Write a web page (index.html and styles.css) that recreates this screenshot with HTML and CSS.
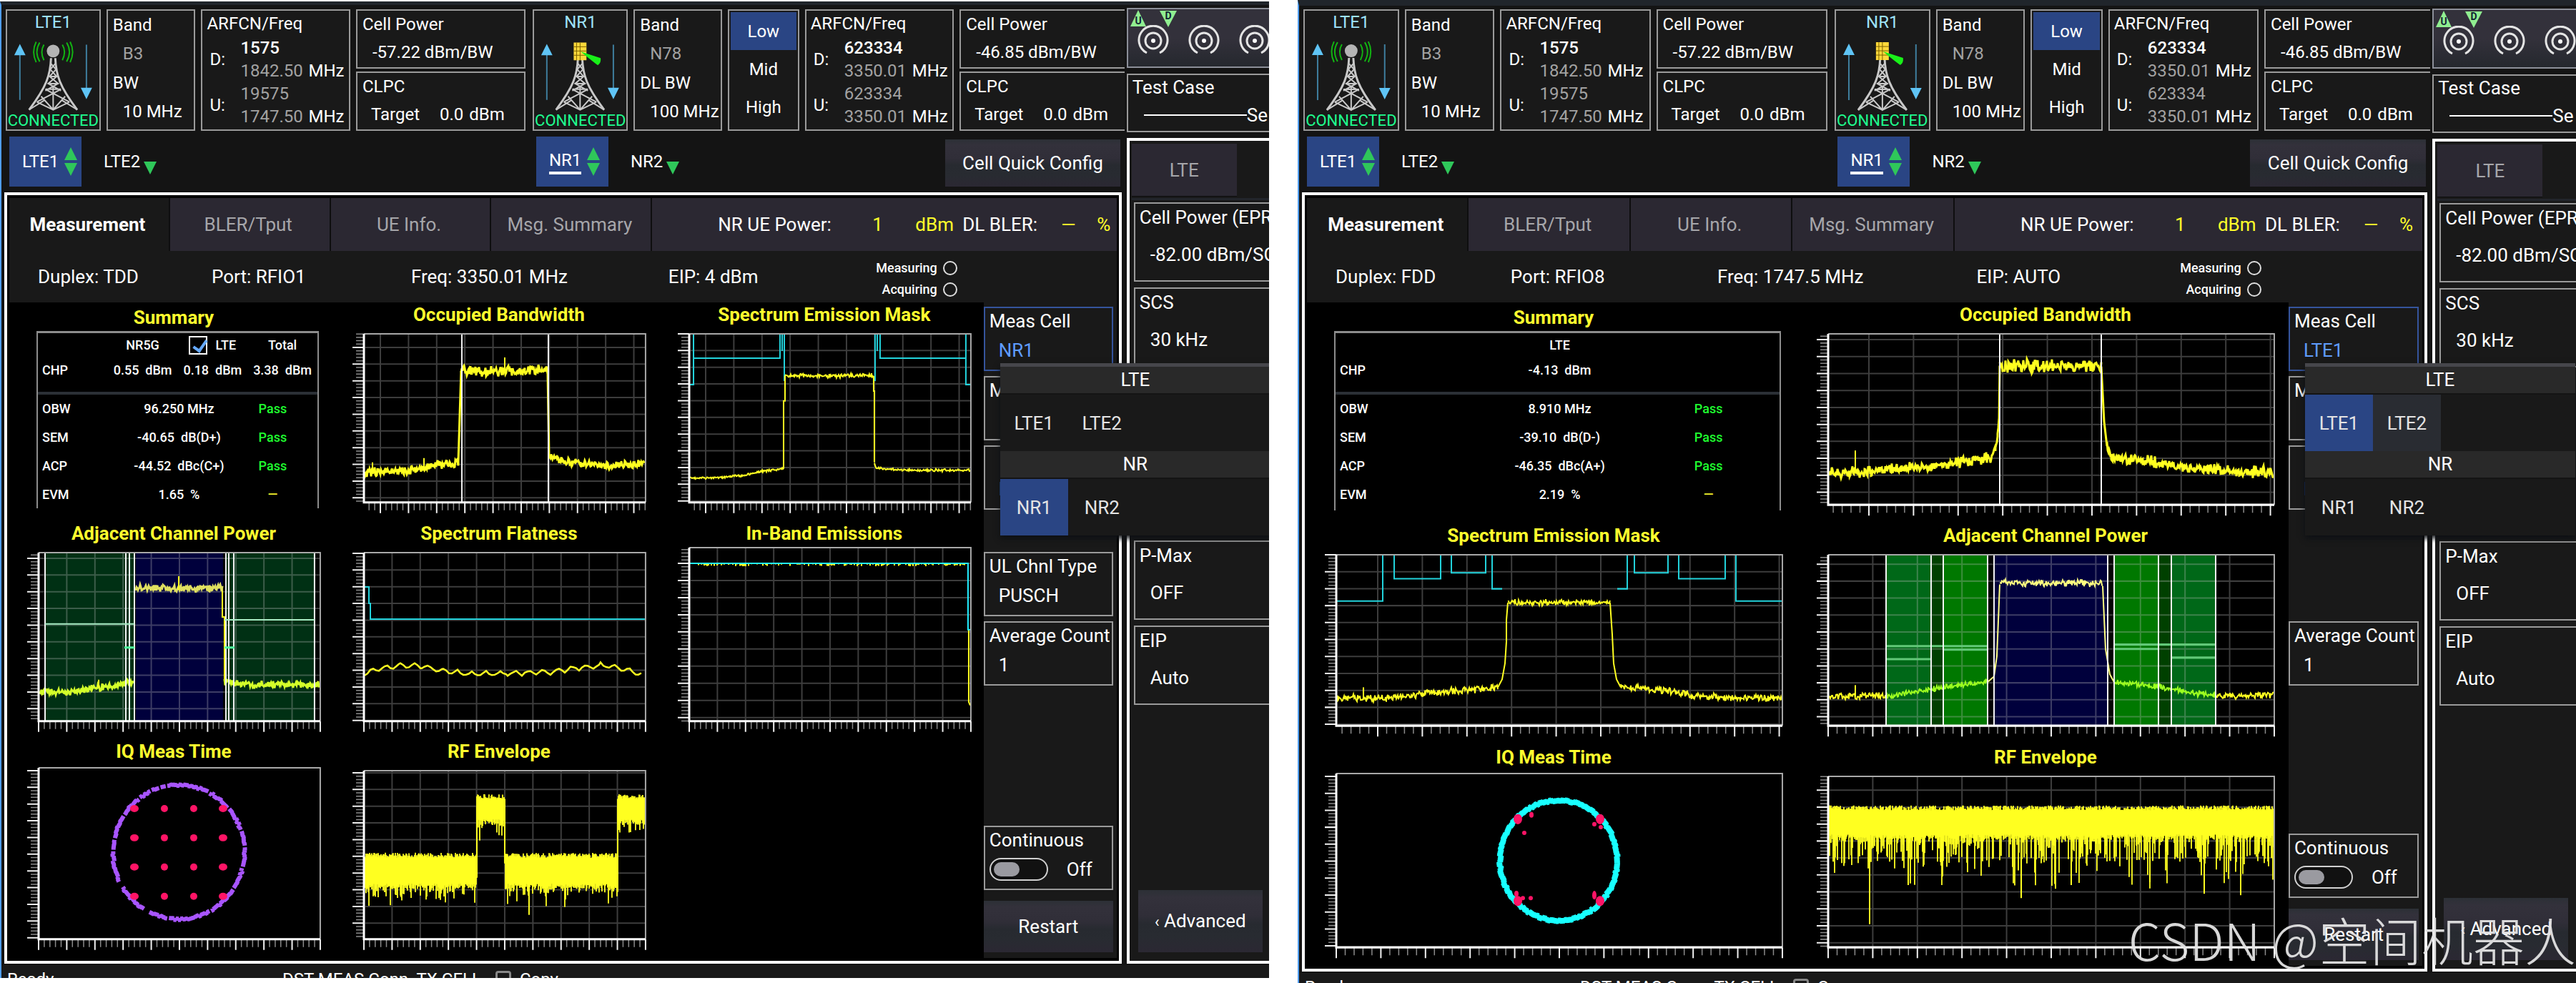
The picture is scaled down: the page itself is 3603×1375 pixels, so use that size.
FILE: index.html
```html
<!DOCTYPE html>
<html lang="en">
<head>
<meta charset="utf-8">
<title>Radio Test Station</title>
<link rel="stylesheet" href="styles.css">
</head>
<body>
<svg class="symbols" aria-hidden="true">
  <symbol id="arrows" viewBox="0 0 130 100">
    <path d="M18 12V83M112 5V70" stroke="#3f7f9f" stroke-width="2"/>
    <path d="M18 4L26 20H10ZM112 82L104 66H120Z" fill="#5fc4f5"/>
  </symbol>
  <symbol id="mast" viewBox="0 0 130 100">
    <g fill="none" stroke="#c9c9c9" stroke-width="2">
      <path stroke-width="3" d="M62 24C61 48 56 64 31 97M68 24C69 48 74 64 99 97"/>
      <path d="M62 32L69 40L60 50L72 60L54 70M68 32L61 40L70 50L58 60L76 70M54 68H76M54 68L88 86M76 68L42 86M48 78L65 97L82 78M42 86L65 97L88 86M65 64V97M31 97L52 84M99 97L78 84M60 50H70M57 60H73"/>
    </g>
  </symbol>
  <symbol id="omni" viewBox="0 0 130 100">
    <circle cx="65" cy="14" r="9" fill="#b4b4b4"/>
    <g fill="none" stroke="#12b312" stroke-width="2">
      <path d="M52 5Q46 15 52 27M46 2Q38 15 46 29M41 1Q34 15 41 30M78 5Q84 15 78 27M84 2Q92 15 84 29M89 1Q96 15 89 30"/>
    </g>
  </symbol>
  <symbol id="beam" viewBox="0 0 130 100">
    <path fill="#ffd83a" d="M56 2H74V27H56Z"/>
    <path fill="none" stroke="#7a6200" d="M60 2V27M65 2V27M56 8H74M56 14H74M56 20H74"/>
    <path fill="#19f019" d="M66 15L94 24Q95 31 90 34Q84 30 66 15Z"/>
  </symbol>
  <symbol id="port" viewBox="0 0 44 44">
    <g fill="none" stroke="#e4e4e4" stroke-width="3">
      <path d="M13 39A20 20 0 1 1 31 39"/>
      <circle cx="22" cy="22" r="11"/>
    </g>
    <circle cx="22" cy="22" r="3" fill="#fff"/>
  </symbol>
  <symbol id="updown" viewBox="0 0 18 40">
    <path fill="#2fc75a" d="M9 0L18 18H0ZM9 40L0 22H18Z"/>
  </symbol>
  <symbol id="down" viewBox="0 0 18 20">
    <path fill="#2fc75a" d="M9 19L0 1H18Z"/>
  </symbol>
</svg>

<main class="stage">

  <section class="screen screen-a" aria-label="NR1 measurement">
    <div class="work">
      <header class="cells">
        <div class="card status"><span class="cell-name">LTE1</span><svg class="tower" viewBox="0 0 130 100"><use href="#arrows"/><use href="#mast"/><use href="#omni"/></svg><span class="connected">CONNECTED</span></div>
        <div class="card band"><span>Band</span><span class="in dim">B3</span><span>BW</span><span class="in">10 MHz</span></div>
        <div class="card freq"><span class="head">ARFCN/Freq</span><span class="dir">D:</span><b>1575</b><span class="dim">1842.50</span><span>MHz</span><span class="dir">U:</span><span class="dim wide">19575</span><span class="dim">1747.50</span><span>MHz</span></div>
        <div class="pair">
          <div class="card power"><span>Cell Power</span><span class="in">-57.22 dBm/BW</span></div>
          <div class="card power"><span>CLPC</span><span class="target"><span>Target</span><span>0.0</span><span>dBm</span></span></div>
        </div>
        <div class="card status second"><span class="cell-name">NR1</span><svg class="tower" viewBox="0 0 130 100"><use href="#arrows"/><use href="#mast"/><use href="#beam"/></svg><span class="connected">CONNECTED</span></div>
        <div class="card band"><span>Band</span><span class="in dim">N78</span><span>DL BW</span><span class="in">100 MHz</span></div>
        <div class="card range"><button class="on">Low</button><button>Mid</button><button>High</button></div>
        <div class="card freq"><span class="head">ARFCN/Freq</span><span class="dir">D:</span><b>623334</b><span class="dim">3350.01</span><span>MHz</span><span class="dir">U:</span><span class="dim wide">623334</span><span class="dim">3350.01</span><span>MHz</span></div>
        <div class="pair cut">
          <div class="card power"><span>Cell Power</span><span class="in">-46.85 dBm/BW</span></div>
          <div class="card power"><span>CLPC</span><span class="target"><span>Target</span><span>0.0</span><span>dBm</span></span></div>
        </div>
      </header>

      <nav class="cell-tabs">
        <div class="group">
          <button class="cell-tab on">LTE1<svg class="updown"><use href="#updown"/></svg></button>
          <button class="cell-tab">LTE2<svg class="down"><use href="#down"/></svg></button>
        </div>
        <div class="group">
          <button class="cell-tab on"><span class="current">NR1</span><svg class="updown"><use href="#updown"/></svg></button>
          <button class="cell-tab">NR2<svg class="down"><use href="#down"/></svg></button>
        </div>
        <button class="soft quick">Cell Quick Config</button>
      </nav>

      <section class="panel">
        <div class="tabs">
          <button class="tab on">Measurement</button><button class="tab">BLER/Tput</button><button class="tab">UE Info.</button><button class="tab">Msg. Summary</button>
          <p class="readout"><span>NR UE Power:</span><em>1</em><em>dBm</em><span>DL BLER:</span><em>—</em><em>%</em></p>
        </div>
        <div class="info">
          <span>Duplex: TDD</span><span>Port: RFIO1</span><span>Freq: 3350.01 MHz</span><span>EIP: 4 dBm</span>
          <div class="lamps"><span>Measuring<i class="lamp"></i></span><span>Acquiring<i class="lamp"></i></span></div>
        </div>
        <div class="body">
          <div class="charts three">
            <section class="chart summary">
              <h2>Summary</h2>
              <div class="sheet">
                <table class="top">
                  <tr class="heads"><td></td><th>NR5G</th><th><label><input type="checkbox" checked>LTE</label></th><th>Total</th></tr>
                  <tr><th>CHP</th><td>0.55&nbsp; dBm</td><td>0.18&nbsp; dBm</td><td>3.38&nbsp; dBm</td></tr>
                </table>
                <table class="low">
                  <tr><th>OBW</th><td>96.250 MHz</td><td class="pass">Pass</td></tr>
                  <tr><th>SEM</th><td>-40.65&nbsp; dB(D+)</td><td class="pass">Pass</td></tr>
                  <tr><th>ACP</th><td>-44.52&nbsp; dBc(C+)</td><td class="pass">Pass</td></tr>
                  <tr><th>EVM</th><td>1.65&nbsp; %</td><td class="none">—</td></tr>
                </table>
              </div>
            </section>
            <section class="chart"><h2>Occupied Bandwidth</h2><svg class="plot" data-plot="nrObw"></svg></section>
            <section class="chart"><h2>Spectrum Emission Mask</h2><svg class="plot" data-plot="nrSem"></svg></section>
            <section class="chart"><h2>Adjacent Channel Power</h2><svg class="plot" data-plot="nrAcp"></svg></section>
            <section class="chart"><h2>Spectrum Flatness</h2><svg class="plot" data-plot="nrFlat"></svg></section>
            <section class="chart"><h2>In-Band Emissions</h2><svg class="plot" data-plot="nrIbe"></svg></section>
            <section class="chart"><h2>IQ Meas Time</h2><svg class="plot" data-plot="nrIq"></svg></section>
            <section class="chart"><h2>RF Envelope</h2><svg class="plot" data-plot="nrRf"></svg></section>
          </div>
          <div class="side">
            <button class="field active"><span>Meas Cell</span><span class="val">NR1</span></button>
            <button class="field"><span>M</span></button>
            <button class="field"><span></span><span class="val">L</span></button>
            <button class="field lower"><span>UL Chnl Type</span><span class="val">PUSCH</span></button>
            <button class="field"><span>Average Count</span><span class="val">1</span></button>
            <label class="field switch"><span>Continuous</span><span class="row"><input type="checkbox" role="switch">Off</span></label>
            <button class="soft restart">Restart</button>
            <div class="popup">
              <h3>LTE</h3>
              <div class="choices"><button>LTE1</button><button>LTE2</button></div>
              <h3>NR</h3>
              <div class="choices"><button class="on">NR1</button><button>NR2</button></div>
            </div>
          </div>
        </div>
      </section>
    </div>

    <aside class="config">
      <div class="ports">
        <svg class="marks" viewBox="0 0 70 26"><path fill="#90ee90" d="M14 1L25 24H3ZM56 25L44 2H68Z"/><text x="14" y="21">U</text><text x="56" y="14">D</text></svg>
        <div class="port-row"><svg><use href="#port"/></svg><svg><use href="#port"/></svg><svg><use href="#port"/></svg></div>
      </div>
      <div class="case"><span>Test Case</span><span class="chosen"><i></i>Se</span></div>
      <section class="setup">
        <button class="tab">LTE</button>
        <div class="fields">
          <button class="field"><span>Cell Power (EPRE)</span><span class="val">-82.00 dBm/SCS</span></button>
          <button class="field"><span>SCS</span><span class="val">30 kHz</span></button>
          <button class="field later"><span>P-Max</span><span class="val">OFF</span></button>
          <button class="field"><span>EIP</span><span class="val">Auto</span></button>
          <button class="soft advanced"><small>‹</small> Advanced</button>
        </div>
      </section>
    </aside>
    <footer class="bar"><span>Ready</span><span>DST MEAS Conn&nbsp; TX CELL</span><i class="sheet-icon"></i><span>Copy</span></footer>
  </section>

  <section class="screen screen-b" aria-label="LTE1 measurement">
    <div class="work">
      <header class="cells">
        <div class="card status"><span class="cell-name">LTE1</span><svg class="tower" viewBox="0 0 130 100"><use href="#arrows"/><use href="#mast"/><use href="#omni"/></svg><span class="connected">CONNECTED</span></div>
        <div class="card band"><span>Band</span><span class="in dim">B3</span><span>BW</span><span class="in">10 MHz</span></div>
        <div class="card freq"><span class="head">ARFCN/Freq</span><span class="dir">D:</span><b>1575</b><span class="dim">1842.50</span><span>MHz</span><span class="dir">U:</span><span class="dim wide">19575</span><span class="dim">1747.50</span><span>MHz</span></div>
        <div class="pair">
          <div class="card power"><span>Cell Power</span><span class="in">-57.22 dBm/BW</span></div>
          <div class="card power"><span>CLPC</span><span class="target"><span>Target</span><span>0.0</span><span>dBm</span></span></div>
        </div>
        <div class="card status second"><span class="cell-name">NR1</span><svg class="tower" viewBox="0 0 130 100"><use href="#arrows"/><use href="#mast"/><use href="#beam"/></svg><span class="connected">CONNECTED</span></div>
        <div class="card band"><span>Band</span><span class="in dim">N78</span><span>DL BW</span><span class="in">100 MHz</span></div>
        <div class="card range"><button class="on">Low</button><button>Mid</button><button>High</button></div>
        <div class="card freq"><span class="head">ARFCN/Freq</span><span class="dir">D:</span><b>623334</b><span class="dim">3350.01</span><span>MHz</span><span class="dir">U:</span><span class="dim wide">623334</span><span class="dim">3350.01</span><span>MHz</span></div>
        <div class="pair cut">
          <div class="card power"><span>Cell Power</span><span class="in">-46.85 dBm/BW</span></div>
          <div class="card power"><span>CLPC</span><span class="target"><span>Target</span><span>0.0</span><span>dBm</span></span></div>
        </div>
      </header>

      <nav class="cell-tabs">
        <div class="group">
          <button class="cell-tab on">LTE1<svg class="updown"><use href="#updown"/></svg></button>
          <button class="cell-tab">LTE2<svg class="down"><use href="#down"/></svg></button>
        </div>
        <div class="group">
          <button class="cell-tab on"><span class="current">NR1</span><svg class="updown"><use href="#updown"/></svg></button>
          <button class="cell-tab">NR2<svg class="down"><use href="#down"/></svg></button>
        </div>
        <button class="soft quick">Cell Quick Config</button>
      </nav>

      <section class="panel">
        <div class="tabs">
          <button class="tab on">Measurement</button><button class="tab">BLER/Tput</button><button class="tab">UE Info.</button><button class="tab">Msg. Summary</button>
          <p class="readout"><span>NR UE Power:</span><em>1</em><em>dBm</em><span>DL BLER:</span><em>—</em><em>%</em></p>
        </div>
        <div class="info">
          <span>Duplex: FDD</span><span>Port: RFIO8</span><span>Freq: 1747.5 MHz</span><span>EIP: AUTO</span>
          <div class="lamps"><span>Measuring<i class="lamp"></i></span><span>Acquiring<i class="lamp"></i></span></div>
        </div>
        <div class="body">
          <div class="charts two">
            <section class="chart summary">
              <h2>Summary</h2>
              <div class="sheet">
                <table class="top single">
                  <tr class="heads"><td></td><th>LTE</th><td></td></tr>
                  <tr><th>CHP</th><td>-4.13&nbsp; dBm</td><td></td></tr>
                </table>
                <table class="low">
                  <tr><th>OBW</th><td>8.910 MHz</td><td class="pass">Pass</td></tr>
                  <tr><th>SEM</th><td>-39.10&nbsp; dB(D-)</td><td class="pass">Pass</td></tr>
                  <tr><th>ACP</th><td>-46.35&nbsp; dBc(A+)</td><td class="pass">Pass</td></tr>
                  <tr><th>EVM</th><td>2.19&nbsp; %</td><td class="none">—</td></tr>
                </table>
              </div>
            </section>
            <section class="chart"><h2>Occupied Bandwidth</h2><svg class="plot" data-plot="lteObw"></svg></section>
            <section class="chart"><h2>Spectrum Emission Mask</h2><svg class="plot" data-plot="lteSem"></svg></section>
            <section class="chart"><h2>Adjacent Channel Power</h2><svg class="plot" data-plot="lteAcp"></svg></section>
            <section class="chart"><h2>IQ Meas Time</h2><svg class="plot" data-plot="lteIq"></svg></section>
            <section class="chart"><h2>RF Envelope</h2><svg class="plot" data-plot="lteRf"></svg></section>
          </div>
          <div class="side">
            <button class="field active"><span>Meas Cell</span><span class="val">LTE1</span></button>
            <button class="field"><span>M</span></button>
            <button class="field"><span></span><span class="val">L</span></button>
            <button class="field lowest"><span>Average Count</span><span class="val">1</span></button>
            <label class="field switch"><span>Continuous</span><span class="row"><input type="checkbox" role="switch">Off</span></label>
            <button class="soft restart">Restart</button>
            <div class="popup">
              <h3>LTE</h3>
              <div class="choices"><button class="on">LTE1</button><button class="hover">LTE2</button></div>
              <h3>NR</h3>
              <div class="choices"><button>NR1</button><button>NR2</button></div>
            </div>
          </div>
        </div>
      </section>
    </div>

    <aside class="config">
      <div class="ports">
        <svg class="marks" viewBox="0 0 70 26"><path fill="#90ee90" d="M14 1L25 24H3ZM56 25L44 2H68Z"/><text x="14" y="21">U</text><text x="56" y="14">D</text></svg>
        <div class="port-row"><svg><use href="#port"/></svg><svg><use href="#port"/></svg><svg><use href="#port"/></svg></div>
      </div>
      <div class="case"><span>Test Case</span><span class="chosen"><i></i>Se</span></div>
      <section class="setup">
        <button class="tab">LTE</button>
        <div class="fields">
          <button class="field"><span>Cell Power (EPRE)</span><span class="val">-82.00 dBm/SCS</span></button>
          <button class="field"><span>SCS</span><span class="val">30 kHz</span></button>
          <button class="field later"><span>P-Max</span><span class="val">OFF</span></button>
          <button class="field"><span>EIP</span><span class="val">Auto</span></button>
          <button class="soft advanced"><small>‹</small> Advanced</button>
        </div>
      </section>
    </aside>
    <footer class="bar"><span>Ready</span><span>DST MEAS Conn&nbsp; TX CELL</span><i class="sheet-icon"></i><span>Copy</span></footer>
  </section>

  <p class="watermark">CSDN @空间机器人</p>
</main>
<script src="plots.js"></script>
</body>
</html>
```
FILE: styles.css
```css
* { box-sizing: border-box; }

body {
  margin: 0;
  background: #fff;
  color: #fff;
  font: 24px/32px Roboto, "Liberation Sans", sans-serif;
}

button {
  padding: 0;
  border: 0;
  background: none;
  color: inherit;
  font: inherit;
  text-align: left;
}

h2, h3, p { margin: 0; }
i, em { font-style: normal; }
.symbols { position: absolute; width: 0; height: 0; }

.stage {
  position: relative;
  display: grid;
  grid-template-columns: 1775fr 1788fr;
  gap: 40px;
  height: 100vh;
  min-height: 1200px;
  overflow: hidden;
}

/* one instrument display */
.screen {
  position: relative;
  display: grid;
  grid-template: minmax(0, 1fr) auto / 1569fr 199fr;
  column-gap: 3px;
  border-left: 2px solid #4f9df0;
  border-top: 8px solid #20252b;
  background: #141414;
  overflow: hidden;
}
.screen-a { margin: 2px 0 7px; border-top-width: 5px; }
.screen-a .bar { height: 18px; }
.screen-b .bar { height: 14px; }

.work {
  display: flex;
  flex-direction: column;
  gap: 8px;
  padding: 5px 0 0 4px;
  min-width: 0;
  min-height: 0;
}
.screen-a .work { padding-top: 6px; }

/* cell header cards */
.cells {
  display: grid;
  grid-template-columns: 133fr 125fr 209fr 238fr 135fr 124fr 100fr 209fr 231fr;
  gap: 8px;
  height: 170px;
  padding-left: 2px;
}
.card {
  border: 2px solid #9a9a9a;
  background: #191919;
  min-width: 0;
  min-height: 0;
  overflow: hidden;
  white-space: nowrap;
}
.dim { color: #a2a2a2; }
.status { display: flex; flex-direction: column; align-items: center; }
.second { margin-left: 2px; }
.cell-name { color: #9fe3fb; line-height: 32px; }
.tower { width: 100%; height: 100px; margin-top: 10px; flex: none; }
.connected { color: #1fff8f; font-size: 22px; line-height: 24px; }
.band { display: grid; grid-template-rows: repeat(4, 1fr); align-items: center; padding: 0 0 5px 7px; }
.in { padding-left: 14px; }
.freq {
  display: grid;
  grid-template-columns: 47px 95px 1fr;
  grid-template-rows: 36px repeat(4, 32px);
  align-items: center;
  padding-left: 6px;
}
.head { grid-column: 1 / -1; }
.dir { grid-row: span 2; padding-left: 4px; }
.freq b, .wide { grid-column: 2 / -1; }
.freq b { font-weight: 500; }
.pair { display: grid; grid-template-rows: 1fr 1fr; gap: 4px; }
.cut .card { border-right: 0; }
.power { display: grid; grid-template-rows: 1fr 1fr; align-items: center; padding: 0 0 2px 7px; }
.target { display: flex; padding-left: 12px; }
.target span:nth-child(2) { margin: 0 8px 0 28px; }
.range { display: grid; grid-template-rows: repeat(3, 1fr); padding: 2px 2px 4px; }
.range button { text-align: center; }
.on { background: #2a4584; }

/* cell selector row */
.cell-tabs { display: grid; grid-template-columns: 738fr 573fr 245fr; height: 70px; padding: 0 6px 0 7px; }
.group { display: flex; }
.cell-tab { display: flex; align-items: center; gap: 8px; padding-left: 18px; }
.cell-tab.on { width: 101px; }
.cell-tab:not(.on) { padding-left: 31px; gap: 5px; }
.current { border-bottom: 4px solid #fff; }
.updown { width: 18px; height: 40px; }
.down { width: 18px; height: 20px; margin-top: 18px; }
.soft {
  background: linear-gradient(#2c3036, #33313b 12%, #302e38 40%, #272a30 55%, #282b31 75%, #2b2833);
  font-size: 26px;
  text-align: center;
}
.quick { margin-top: 4px; }

/* measurement panel */
.panel {
  flex: 1;
  display: grid;
  grid-template-rows: 74px 72px minmax(0, 1fr);
  min-height: 0;
  margin-right: 4px;
  padding: 4px 3px;
  border: 4px solid #fff;
  background: #000;
}
.tabs {
  display: grid;
  grid-template-columns: repeat(4, 223fr) 650fr;
  gap: 2px;
  background: #0e0e0f;
  font-size: 26px;
}
.tab { background: #2b2832; color: #a6a6aa; text-align: center; font-size: 26px; }
.tabs .tab { padding-right: 4px; }
.tab.on { background: #191919; color: #fff; font-weight: 700; }
.readout {
  display: grid;
  grid-template-columns: 216px 60px 66px 138px 50px 1fr;
  align-items: center;
  padding-left: 92px;
  background: #2b2832;
  white-space: nowrap;
}
em { color: #ffff2a; }
.info {
  display: grid;
  grid-template-columns: 243fr 279fr 360fr 280fr 347fr;
  align-items: center;
  padding-left: 40px;
  background: #191919;
  font-size: 26px;
  white-space: nowrap;
}
.lamps { display: grid; padding-top: 6px; font-size: 18px; font-weight: 500; line-height: 30px; }
.lamps span { display: flex; align-items: center; justify-content: flex-end; gap: 8px; width: 124px; }
.lamp { width: 20px; height: 20px; border: 2px solid #ddd; border-radius: 50%; }

.body { display: grid; grid-template-columns: 1363fr 186fr; min-height: 0; }
.screen-b .info > :nth-child(3) { padding-left: 8px; }
.screen-b .info > :nth-child(4) { padding-left: 8px; }

.charts { display: grid; grid-template-rows: repeat(3, minmax(0, 1fr)); min-width: 0; min-height: 0; }
.three { grid-template-columns: repeat(3, minmax(0, 1fr)); column-gap: 45px; padding: 0 18px 0 25px; }
.two { grid-template-columns: repeat(2, minmax(0, 1fr)); column-gap: 48px; padding: 0 20px 0 25px; }
.chart { display: grid; grid-template-rows: 44px minmax(0, 1fr); min-height: 0; padding-bottom: 10px; }
.chart h2 { color: #ffff2e; font-size: 26px; font-weight: 700; line-height: 34px; text-align: center; white-space: nowrap; }
.plot { display: block; width: 100%; height: 100%; overflow: visible; }

.summary { grid-template-rows: 40px minmax(0, 1fr); padding-bottom: 18px; }
.chart.summary h2 { line-height: 42px; }
.sheet { margin: 0 2px 0 13px; border: solid #8c8c8c; border-width: 3px 2px 0; font-size: 18px; line-height: 20px; }
table { width: 100%; border-collapse: collapse; table-layout: fixed; text-align: center; white-space: nowrap; }
td, th { height: 40px; padding: 0; font-weight: 500; }
tr > th:first-child { width: 25%; padding-left: 6px; text-align: left; }
.top { border-bottom: 4px solid #2b3036; }
.top td, .top th { height: 50px; padding-bottom: 12px; }
.heads td, .top .heads th { height: 34px; padding-bottom: 0; }
.heads > :first-child { width: 25%; }
.single .heads > :first-child, .low th:first-child { width: 33%; }
.single .heads > :last-child, .low td:last-child { width: 32%; }
.heads label { display: flex; align-items: center; justify-content: center; gap: 11px; }
.heads input {
  appearance: none;
  width: 26px;
  height: 26px;
  margin: 0;
  border: 2px solid #fff;
}
.heads input:checked::before {
  content: "";
  display: block;
  width: 8px;
  height: 16px;
  margin: 0 0 0 8px;
  border: solid #66aaff;
  border-width: 0 4px 4px 0;
  transform: rotate(35deg);
}
.pass { color: #1fff2f; }
.none { color: #f2f22c; }

/* right-hand measurement settings */
.side {
  position: relative;
  display: flex;
  flex-direction: column;
  gap: 7px;
  padding: 6px 5px 8px 0;
  background: #191919;
  min-height: 0;
}
.field {
  display: grid;
  grid-template-rows: 36px 46px;
  align-content: start;
  align-items: center;
  height: 90px;
  flex: none;
  padding: 0 0 0 6px;
  border: 2px solid #9a9a9a;
  background: #191919;
  font-size: 26px;
  white-space: nowrap;
  overflow: hidden;
}
.side .val { padding-left: 13px; }
.active { border-color: #35549c; }
.active .val { color: #5f9cff; }
.lower { margin-top: 52px; }
.lowest { margin-top: 149px; }
.switch { margin-top: auto; }
.row { display: flex; align-items: center; gap: 26px; }
.switch input {
  appearance: none;
  width: 82px;
  height: 32px;
  margin: 0;
  padding: 4px;
  border: 2px solid #d0d0d0;
  border-radius: 16px;
  background: #111;
}
.switch input::before {
  content: "";
  display: block;
  width: 36px;
  height: 20px;
  border-radius: 10px;
  background: #9a9aa0;
}
.restart { flex: none; height: 72px; margin-top: 8px; }

.popup {
  position: absolute;
  z-index: 2;
  top: 85px;
  left: 23px;
  width: 378px;
  border-top: 5px solid #46464b;
  background: #191919;
  box-shadow: 0 4px 8px #0d1014;
  font-size: 26px;
}
.popup h3 { height: 39px; background: #292929; border-bottom: 2px solid #141414; font: inherit; line-height: 37px; text-align: center; }
.choices { display: flex; height: 79px; }
.choices button { width: 95px; text-align: center; color: #e4e4e4; }
.hover { background: #292c32; }

/* configuration column, cut by the display's edge */
.config {
  display: flex;
  flex-direction: column;
  gap: 8px;
  padding-top: 4px;
  min-width: 0;
  min-height: 0;
  overflow: hidden;
}
.ports {
  height: 84px;
  flex: none;
  border: solid #8c8f99;
  border-width: 2px 0 2px 2px;
  background: linear-gradient(#33313b 50%, #25282e);
}
.marks { display: block; width: 70px; height: 26px; }
.marks text { font: bold 14px Roboto, sans-serif; fill: #123; text-anchor: middle; }
.port-row { display: flex; gap: 27px; padding-left: 13px; margin-top: -4px; }
.port-row svg { width: 44px; height: 44px; flex: none; }
.case {
  display: grid;
  grid-template-rows: 34px 44px;
  align-items: center;
  height: 82px;
  flex: none;
  padding-left: 6px;
  border: solid #9a9a9a;
  border-width: 2px 0 2px 2px;
  background: #191919;
  font-size: 26px;
}
.chosen { display: flex; align-items: center; padding-left: 16px; }
.chosen i { width: 144px; height: 2px; flex: none; background: #fff; }
.setup {
  flex: 1;
  display: flex;
  flex-direction: column;
  min-height: 0;
  padding: 4px 0 4px 3px;
  border: solid #fff;
  border-width: 4px 0 4px 4px;
  background: #191919;
}
.setup .tab { width: 147px; height: 74px; flex: none; border-bottom: 1px solid #0d0d0d; }
.fields { flex: 1; display: flex; flex-direction: column; gap: 8px; margin-top: 2px; padding: 3px 0 8px 3px; border-top: 3px solid #22252b; min-height: 0; }
.fields .field { grid-template-rows: 38px 66px; height: 111px; border-right: 0; }
.fields .val { padding-left: 15px; }
.fields .later { margin-top: 235px; }
.advanced { width: 174px; height: 87px; flex: none; margin: auto 0 0 6px; }
small { font-size: 22px; }

/* status line, only its top edge is on screen */
.bar { display: flex; grid-column: 1 / -1; align-items: flex-start; margin-top: 2px; padding: 8px 0 0 8px; background: #191919; overflow: hidden; line-height: 24px; }
.bar span:first-child { width: 385px; }
.sheet-icon { width: 22px; height: 24px; margin: 0 12px 0 20px; border: 3px solid #888; border-radius: 4px; flex: none; }

.watermark {
  position: absolute;
  z-index: 3;
  right: 0;
  bottom: 12px;
  color: rgba(228, 228, 228, .94);
  font: 300 72px/100px "Noto Sans CJK SC", sans-serif;
  white-space: nowrap;
}
```
FILE: plots.js
```js
// Draws the measurement plots. Frame coordinates: origin at the frame's top left corner.
const NS = 'http://www.w3.org/2000/svg';
const YELLOW = '#ffff20', CYAN = '#22d3dc', WHITE = '#f4f4f4';
const LEFT = 16, HEIGHT = 236, TOTAL = 252;

let seed = 7;
function rnd() {
  seed = (seed * 1103515245 + 12345) % 2147483648;
  return seed / 2147483648;
}

function add(parent, name, attrs) {
  const el = document.createElementNS(NS, name);
  for (const key in attrs) el.setAttribute(key, attrs[key]);
  parent.appendChild(el);
  return el;
}
function path(g, d, stroke, width) {
  add(g, 'path', { d, stroke, 'stroke-width': width || 2, fill: 'none' });
}
function noisy(g, points, amp, width, color) {
  let d = '';
  for (let i = 1; i < points.length; i++) {
    const [x0, y0] = points[i - 1], [x1, y1] = points[i];
    const n = Math.max(1, Math.round(x1 - x0));
    const a = Math.abs(y1 - y0) > 30 ? 0 : amp;
    for (let k = 0; k <= n; k++) {
      const y = y0 + (y1 - y0) * k / n + (rnd() + rnd() - 1) * a;
      d += (d ? 'L' : 'M') + (x0 + (x1 - x0) * k / n).toFixed(1) + ' ' + y.toFixed(1);
    }
  }
  path(g, d, color || YELLOW, width);
}
function envelope(g, x0, x1, top, bottom, deep, density) {
  let d = '';
  for (let x = x0; x <= x1; x += 1) {
    const r = rnd();
    const low = bottom + rnd() * 8 + (r > .6 - density ? rnd() * deep * .6 : 0) + (r > .92 ? deep * .5 : 0);
    d += 'M' + x + ' ' + (top - rnd() * 7).toFixed(1) + 'V' + low.toFixed(1);
  }
  path(g, d, YELLOW, 1.8);
}
function area(g, x0, x1, fill) {
  add(g, 'rect', { x: x0, y: 0, width: x1 - x0, height: HEIGHT, fill });
}
function uprights(g, xs) {
  xs.forEach(x => path(g, `M${x} 0V${HEIGHT}`, WHITE, 2));
}
function spike(g, x, y0, y1) { path(g, `M${x} ${y0}V${y1}`, YELLOW, 2); }
function blob(g, x, y, w, h) { add(g, 'ellipse', { cx: x, cy: y, rx: w, ry: h, fill: '#ff1466' }); }
function ring(g, cx, cy, rx, ry, color, width, gaps) {
  let d = '';
  for (let a = 0; a < 360; a += 2) {
    if (gaps.includes(a)) continue;
    const t = a * Math.PI / 180, t2 = (a + 2.6) * Math.PI / 180, k = 1 + (rnd() - .5) * .025;
    d += `M${(cx + rx * k * Math.cos(t)).toFixed(1)} ${(cy + ry * k * Math.sin(t)).toFixed(1)}L${(cx + rx * k * Math.cos(t2)).toFixed(1)} ${(cy + ry * k * Math.sin(t2)).toFixed(1)}`;
  }
  path(g, d, color, width);
}

const plots = {
  nrObw: { w: 394, vx: 23, hy: 19, draw(g) {
    noisy(g, [[1, 194], [40, 193], [80, 189], [132, 179], [133, 148], [136, 52]], 8, 3);
    noisy(g, [[136, 51], [190, 53], [225, 52], [257, 50]], 8, 3);
    noisy(g, [[257, 51], [259, 172], [280, 179], [320, 184], [360, 184], [393, 181]], 7, 3);
    spike(g, 197, 33, 52); spike(g, 84, 174, 190); spike(g, 12, 180, 193);
    uprights(g, [137, 258]);
  } },
  nrSem: { w: 394, vx: 23, hy: 0, draw(g) {
    path(g, 'M1 71H6V0M6 34H127V0M130 0V24M133 0V66M260 66V0M263 0V24M267 0V34H387M387 0V71H393', CYAN);
    noisy(g, [[1, 202], [45, 201], [70, 199], [105, 192], [132, 189]], 2);
    path(g, 'M132 189V94H134V59M258 59V80H259V180', YELLOW);
    noisy(g, [[134, 59], [258, 58]], 3.5);
    noisy(g, [[259, 180], [262, 188], [300, 191], [393, 191]], 2);
  } },
  nrAcp: { w: 394, vx: 0, hy: 8, under(g) {
    area(g, 9, 134, '#003014'); area(g, 136, 258, '#00003c'); area(g, 262, 386, '#003014');
  }, draw(g) {
    noisy(g, [[1, 196], [40, 195], [80, 190], [133, 181]], 6, 3, '#d4ff2a');
    path(g, 'M134 181V51M257 50V90H260V180', YELLOW);
    noisy(g, [[135, 49], [200, 51], [257, 49]], 6, 3, '#e0e060');
    spike(g, 196, 33, 52); spike(g, 84, 178, 190);
    noisy(g, [[260, 180], [300, 185], [393, 185]], 6, 3, '#d4ff2a');
    uprights(g, [9, 122, 127, 134, 262, 266, 273, 386]);
    path(g, 'M9 100H134M260 94H386', '#a8ecc4', 2);
    path(g, 'M120 133H134M260 133H274', '#50ffa0', 3);
  } },
  nrFlat: { w: 394, vx: 0, hy: 1, draw(g) {
    path(g, 'M1 48H7V71H9V93H393', CYAN);
    const mid = [[0, 168], [20, 162], [50, 157], [80, 158], [110, 165], [150, 169], [200, 168], [260, 166], [300, 160], [330, 157], [355, 160], [375, 166], [390, 171]];
    let d = '';
    for (let i = 1; i < mid.length; i++) {
      const [x0, y0] = mid[i - 1], [x1, y1] = mid[i];
      for (let x = x0; x < x1; x += 4) {
        const saw = Math.abs((x % 20) - 10) / 10 * 7 - 3.5;
        d += (d ? 'L' : 'M') + (x + 1) + ' ' + (y0 + (y1 - y0) * (x - x0) / (x1 - x0) + saw + rnd() * 2).toFixed(1);
      }
    }
    path(g, d, YELLOW, 2.5);
  } },
  nrIbe: { w: 394, vx: 0, hy: 15, top: -7, pitch: 24, draw(g) {
    let d = '';
    for (let x = 1; x < 388; x += 2) if (rnd() > .45) d += `M${x} 14V${(16 + rnd() * 3).toFixed(1)}`;
    path(g, d, YELLOW);
    path(g, 'M391 108V209L393 214', YELLOW);
    path(g, 'M1 15H390V108H393', '#22eeff');
  } },
  nrIq: { w: 394, vx: 0, hy: 0, top: -4, bare: true, draw(g) {
    ring(g, 196, 114, 92, 94, '#a855ff', 6, [12, 32, 60, 116, 118, 120, 148, 150, 152, 180, 190, 212, 232, 244, 252, 258, 296, 318, 340, 354, 98]);
    [134, 176, 217, 258].forEach(x => [53, 94, 135, 176].forEach(y =>
      blob(g, x, y, x === 134 || x === 258 ? 6 : 5, 5)));
  } },
  nrRf: { w: 394, vx: 0, hy: 3, draw(g) {
    envelope(g, 1, 157, 122, 158, 26, 0);
    envelope(g, 158, 197, 40, 68, 24, 0);
    envelope(g, 198, 354, 122, 158, 26, 0);
    envelope(g, 355, 393, 40, 68, 24, 0);
    path(g, 'M158 150V50M197 40V130M355 170V50', YELLOW);
    spike(g, 231, 160, 202);
  } },
  lteObw: { w: 624, vx: 57, hy: 8, draw(g) {
    noisy(g, [[1, 192], [60, 190], [130, 184], [190, 177], [228, 171], [234, 160], [237, 140], [239, 121], [240, 44]], 9, 3);
    noisy(g, [[240, 44], [382, 45]], 11, 3);
    noisy(g, [[382, 45], [386, 121], [390, 155], [396, 170], [440, 175], [500, 184], [560, 190], [623, 191]], 9, 3);
    spike(g, 38, 161, 190);
    uprights(g, [240, 382]);
  } },
  lteSem: { w: 624, vx: 58, hy: 0, draw(g) {
    path(g, 'M1 64H65V0M81 0V33H146V0M161 0V25H209V0M218 0V47H232M393 47H407V0M417 0V25H464V0M479 0V33H544V0M559 0V64H623', CYAN, 2);
    noisy(g, [[1, 198], [70, 198], [140, 190], [226, 183]], 6);
    path(g, 'M226 183L232 172L236 150L238 120V90L240 66M383 66L386 110L388 150L392 172L398 183', YELLOW);
    noisy(g, [[240, 66], [383, 66]], 5);
    noisy(g, [[398, 183], [460, 187], [500, 194], [560, 198], [623, 198]], 6);
    spike(g, 38, 183, 198);
  } },
  lteAcp: { w: 624, vx: 0, hy: 13, under(g) {
    area(g, 81, 144, '#006818'); area(g, 144, 161, '#004000'); area(g, 161, 223, '#007800');
    area(g, 233, 391, '#00003c'); area(g, 401, 462, '#007800'); area(g, 462, 480, '#004000'); area(g, 480, 542, '#006818');
  }, draw(g) {
    noisy(g, [[1, 196], [81, 195]], 6);
    noisy(g, [[81, 195], [150, 185], [224, 175]], 5, 2, '#9cff20');
    path(g, 'M224 175L232 168L236 140L240 41M384 43L388 130L394 165L400 176', '#ffff80');
    noisy(g, [[240, 39], [384, 39]], 6, 2, '#ffff80');
    noisy(g, [[400, 176], [462, 182], [500, 190], [542, 193]], 5, 2, '#9cff20');
    noisy(g, [[542, 195], [623, 194]], 6);
    spike(g, 38, 180, 196);
    path(g, 'M81 126H223M81 144H144M161 131H223M401 124H542M401 130H462M480 142H542', '#62c878', 3);
    uprights(g, [81, 144, 161, 223, 232, 391, 400, 462, 480, 542]);
  } },
  lteIq: { w: 624, vx: 0, hy: 0, top: -4, bare: true, draw(g) {
    ring(g, 311, 116, 82, 83, '#18ffff', 8, []);
    blob(g, 254, 59, 6, 7); blob(g, 369, 59, 6, 7); blob(g, 254, 172, 6, 7); blob(g, 369, 172, 6, 7);
    blob(g, 273, 53, 3, 4); blob(g, 263, 78, 3, 3); blob(g, 361, 66, 3, 3); blob(g, 370, 70, 3, 3);
    blob(g, 272, 168, 3, 3); blob(g, 361, 164, 3, 6); blob(g, 252, 162, 3, 4); blob(g, 261, 168, 3, 3);
  } },
  lteRf: { w: 624, vx: 0, hy: 19, draw(g) {
    envelope(g, 1, 623, 47, 80, 62, .15);
    [[58, 204], [112, 150], [160, 138], [270, 168], [318, 155], [340, 150], [450, 146], [526, 162], [577, 164]].forEach(([x, y]) => spike(g, x, 80, y));
  } }
};

function render(svg, p) {
  const pitchX = p.w > 500 ? 62.4 : 39.4, pitchY = p.pitch || 23.4, top = p.top || 0;
  svg.setAttribute('viewBox', `0 0 ${p.w + LEFT} ${TOTAL}`);
  svg.setAttribute('preserveAspectRatio', 'none');
  const g = add(svg, 'g', { transform: `translate(${LEFT} 0)` });
  if (p.under) p.under(g);
  let grid = '', major = '', minor = '';
  for (let i = -5; i < 60; i++) {
    const x = p.vx + i * pitchX / 5, y = p.hy + i * pitchY / 5, big = i % 5 === 0;
    if (x >= 0 && x <= p.w) {
      if (big) { major += `M${x.toFixed(1)} ${HEIGHT}v15`; if (x > 2 && x < p.w - 2) grid += `M${x.toFixed(1)} ${top}V${HEIGHT}`; }
      else minor += `M${x.toFixed(1)} ${HEIGHT}v11`;
    }
    if (y >= top && y <= HEIGHT) {
      if (big) { major += `M-16 ${y.toFixed(1)}H0`; if (y > top + 1) grid += `M2 ${y.toFixed(1)}H${p.w}`; }
      else minor += `M-11 ${y.toFixed(1)}H0`;
    }
  }
  if (!p.bare) path(g, grid, 'rgba(190,190,190,.32)', 2);
  path(g, minor, '#8a8a8a', 1.5);
  path(g, major, '#f0f0f0', 2);
  p.draw(g);
  path(g, `M0 ${top}H${p.w}V${HEIGHT}`, '#a8a8a8', 2);
  path(g, `M0 ${top}V${HEIGHT}H${p.w}`, '#fff', 3);
}

document.querySelectorAll('[data-plot]').forEach(svg => render(svg, plots[svg.dataset.plot]));
```
